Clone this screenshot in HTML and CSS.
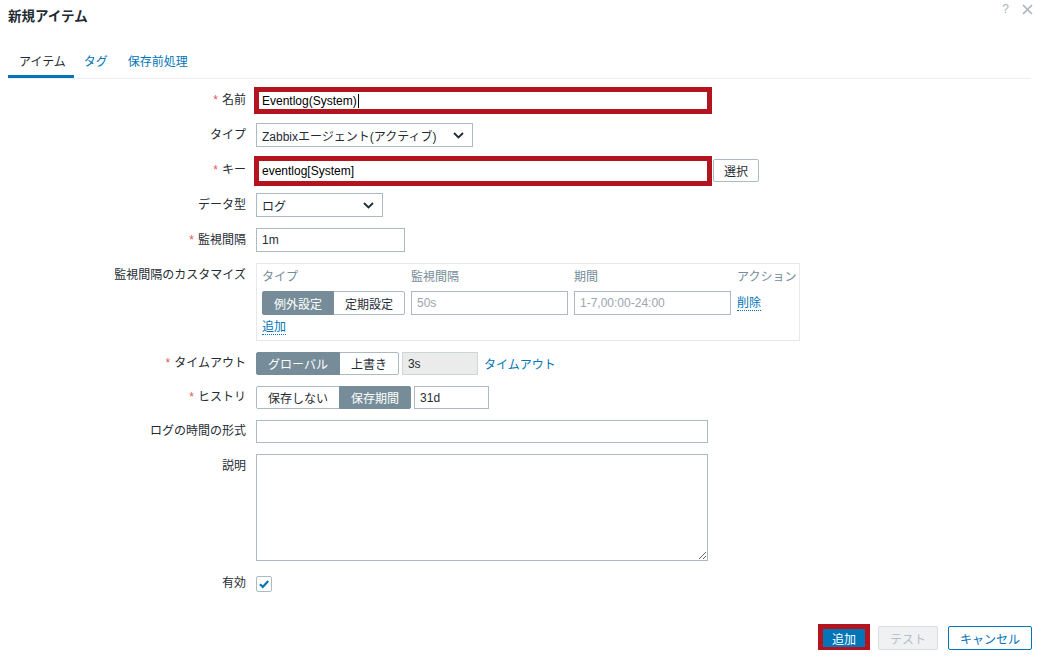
FILE: index.html
```html
<!DOCTYPE html>
<html lang="ja">
<head>
<meta charset="utf-8">
<title>新規アイテム</title>
<link rel="stylesheet" href="styles.css">
</head>
<body>
<div class="dialog">
  <header class="dlg-head">
    <h1 class="dlg-title">新規アイテム</h1>
    <div class="head-icons">
      <span class="help">?</span>
      <svg class="close" width="11" height="11" viewBox="0 0 11 11"><path d="M1 1L10 10M10 1L1 10" stroke="#a9b4ba" stroke-width="1.6" fill="none"/></svg>
    </div>
  </header>

  <nav class="tabs">
    <a class="tab active">アイテム</a>
    <a class="tab">タグ</a>
    <a class="tab">保存前処理</a>
  </nav>

  <div class="form">
    <div class="lbl"><span class="req">*</span>名前</div>
    <div class="field">
      <div class="inp marked m-name">Eventlog(System)<span class="caret"></span></div>
    </div>

    <div class="lbl">タイプ</div>
    <div class="field">
      <div class="inp sel w-type"><span>Zabbixエージェント(アクティブ)</span><svg width="11" height="7" viewBox="0 0 11 7"><path d="M1 1l4.5 4.5L10 1" stroke="#1f2c33" stroke-width="1.8" fill="none"/></svg></div>
    </div>

    <div class="lbl"><span class="req">*</span>キー</div>
    <div class="field">
      <div class="inp marked m-key">eventlog[System]</div>
      <button class="btn btn-alt">選択</button>
    </div>

    <div class="lbl">データ型</div>
    <div class="field">
      <div class="inp sel w-dtype"><span>ログ</span><svg width="11" height="7" viewBox="0 0 11 7"><path d="M1 1l4.5 4.5L10 1" stroke="#1f2c33" stroke-width="1.8" fill="none"/></svg></div>
    </div>

    <div class="lbl"><span class="req">*</span>監視間隔</div>
    <div class="field">
      <div class="inp w-delay">1m</div>
    </div>

    <div class="lbl">監視間隔のカスタマイズ</div>
    <div class="field top">
      <div class="custom">
        <div class="c-grid">
          <div class="c-head">タイプ</div>
          <div class="c-head">監視間隔</div>
          <div class="c-head">期間</div>
          <div class="c-head">アクション</div>
          <div class="seg">
            <span class="on">例外設定</span><span>定期設定</span>
          </div>
          <div class="inp ph">50s</div>
          <div class="inp ph">1-7,00:00-24:00</div>
          <div class="c-act"><a class="dlink">削除</a></div>
        </div>
        <div class="c-add"><a class="dlink">追加</a></div>
      </div>
    </div>

    <div class="lbl r23"><span class="req">*</span>タイムアウト</div>
    <div class="field r23">
      <div class="seg">
        <span class="on">グローバル</span><span>上書き</span>
      </div>
      <div class="inp dis w-timeout">3s</div>
      <a class="link">タイムアウト</a>
    </div>

    <div class="lbl r23"><span class="req">*</span>ヒストリ</div>
    <div class="field r23">
      <div class="seg">
        <span>保存しない</span><span class="on">保存期間</span>
      </div>
      <div class="inp w-hist">31d</div>
    </div>

    <div class="lbl r23">ログの時間の形式</div>
    <div class="field r23">
      <div class="inp w-wide"></div>
    </div>

    <div class="lbl">説明</div>
    <div class="field top">
      <textarea class="txt"></textarea>
    </div>

    <div class="lbl r23">有効</div>
    <div class="field r23">
      <span class="chk"><svg width="14" height="14" viewBox="0 0 14 14"><path d="M3 7.2l2.8 2.8L11.2 4" stroke="#0275b8" stroke-width="2.2" fill="none"/></svg></span>
    </div>
  </div>

  <footer class="dlg-foot">
    <button class="btn btn-primary">追加</button>
    <button class="btn btn-disabled">テスト</button>
    <button class="btn btn-outline">キャンセル</button>
  </footer>
</div>
</body>
</html>
```

FILE: styles.css
```css
body {
  margin: 0;
  background: #fff;
  font-family: "Liberation Sans", Arial, "Noto Sans CJK JP", sans-serif;
  font-size: 12px;
  color: #1f2c33;
}

.dialog {
  padding: 0 8px;
}

.dlg-head {
  display: flex;
  justify-content: space-between;
  height: 34px;
}

.dlg-title {
  margin: 0;
  font-size: 13.5px;
  font-weight: bold;
  line-height: 34px;
  color: #1f2c33;
}

.head-icons {
  display: flex;
  align-items: center;
  gap: 13px;
  height: 18px;
  margin-right: -2px;
}

.help {
  color: #a9b4ba;
  font-size: 12px;
  line-height: 18px;
}

.tabs {
  display: flex;
  margin-top: 10px;
  border-bottom: 1px solid #ebeef0;
}

.tab {
  display: block;
  padding: 6px 10px 1px;
  line-height: 24px;
  border-bottom: 3px solid transparent;
  color: #0275b8;
}

.tab.active {
  color: #1f2c33;
  border-bottom-color: #0275b8;
  padding-left: 11px;
  padding-right: 8px;
}

.form {
  display: grid;
  grid-template-columns: 238px 1fr;
  column-gap: 10px;
  row-gap: 11px;
  padding-top: 9px;
}

.lbl {
  text-align: right;
  line-height: 24px;
  white-space: nowrap;
}

.lbl.r23 {
  line-height: 23px;
}

.req {
  color: #e45959;
  margin-right: 4px;
}

.field {
  display: flex;
  align-items: center;
  height: 24px;
}

.field.r23 {
  height: 23px;
}

.field.top {
  height: auto;
  align-items: flex-start;
}

.inp {
  box-sizing: border-box;
  height: 100%;
  border: 1px solid #acbbc2;
  background: #fff;
  padding: 0 5px;
  display: flex;
  align-items: center;
  white-space: nowrap;
  color: #1f2c33;
}

.field .inp {
  height: 24px;
}

.field.r23 .inp {
  height: 23px;
}

.inp.marked {
  border: 5px solid #b3141e;
  width: 458px;
  padding: 0 3px;
  color: #000;
}

.field .inp.m-name {
  height: 27px;
  margin: -1px 0 -2px -2px;
}

.field .inp.m-key {
  height: 30px;
  margin: -2px 0 -4px -2px;
}

.caret {
  display: inline-block;
  width: 1px;
  height: 14px;
  background: #000;
  margin-left: 1px;
}

.sel {
  justify-content: space-between;
  padding-right: 8px;
}

.w-type { width: 217px; }
.w-dtype { width: 127px; }
.w-delay { width: 149px; }
.w-timeout { width: 76px; margin-left: 3px; }
.w-hist { width: 75px; margin-left: 3px; }
.w-wide { width: 452px; }

.inp.dis {
  background: #ebebeb;
  border-color: #cdd5d9;
}

.btn {
  box-sizing: border-box;
  height: 24px;
  border: 1px solid #acbbc2;
  border-radius: 2px;
  background: #fff;
  font: inherit;
  color: #1f2c33;
  padding: 0 10px;
  cursor: pointer;
}

.btn-alt {
  height: 23px;
  width: 46px;
  margin-left: 1px;
  padding: 0;
}

.custom {
  box-sizing: border-box;
  width: 544px;
  border: 1px solid #e6eaec;
  padding: 4px 5px;
}

.c-grid {
  display: grid;
  grid-template-columns: 143px 157px 157px auto;
  column-gap: 6px;
  row-gap: 5px;
}

.c-head {
  line-height: 18px;
  color: #768d99;
  white-space: nowrap;
}

.c-grid .inp {
  height: 24px;
}

.inp.ph {
  color: #9aa6ad;
}

.c-act {
  display: flex;
  align-items: center;
}

.c-add {
  margin-top: 3px;
  line-height: 18px;
}

.dlink {
  color: #0275b8;
  border-bottom: 1px dotted #0275b8;
  line-height: 14px;
}

.link {
  color: #0275b8;
  margin-left: 6px;
}

.seg {
  display: flex;
  height: 24px;
}

.field.r23 .seg {
  height: 23px;
}

.seg span {
  box-sizing: border-box;
  display: flex;
  align-items: center;
  padding: 0 11px;
  border: 1px solid #acbbc2;
  background: #fff;
  color: #1f2c33;
  white-space: nowrap;
}

.seg span + span {
  margin-left: -1px;
}

.seg span:first-child {
  border-radius: 2px 0 0 2px;
}

.seg span:last-child {
  border-radius: 0 2px 2px 0;
}

.seg span.on {
  background: #768d99;
  border-color: #768d99;
  color: #fff;
  position: relative;
}

.txt {
  box-sizing: border-box;
  width: 452px;
  height: 107px;
  border: 1px solid #acbbc2;
  margin: 0;
  padding: 4px 5px;
  font: inherit;
  resize: vertical;
}

.chk {
  box-sizing: border-box;
  width: 16px;
  height: 16px;
  border: 1px solid #acbbc2;
  border-radius: 2px;
  display: flex;
  align-items: center;
  justify-content: center;
}

.dlg-foot {
  display: flex;
  justify-content: flex-end;
  align-items: center;
  margin-top: 31px;
  margin-right: -1px;
}

.btn-primary {
  height: 28px;
  width: 52px;
  border: 5px solid #b3141e;
  background: #0275b8;
  color: #fff;
  padding: 0;
  margin: -2px 0;
  border-radius: 0;
}

.btn-disabled {
  width: 60px;
  margin-left: 8px;
  background: #f0f1f2;
  border-color: #d9dfe2;
  color: #b6bfc4;
  padding: 0;
}

.btn-outline {
  width: 84px;
  margin-left: 10px;
  border-color: #0275b8;
  color: #0275b8;
  padding: 0;
}
```
